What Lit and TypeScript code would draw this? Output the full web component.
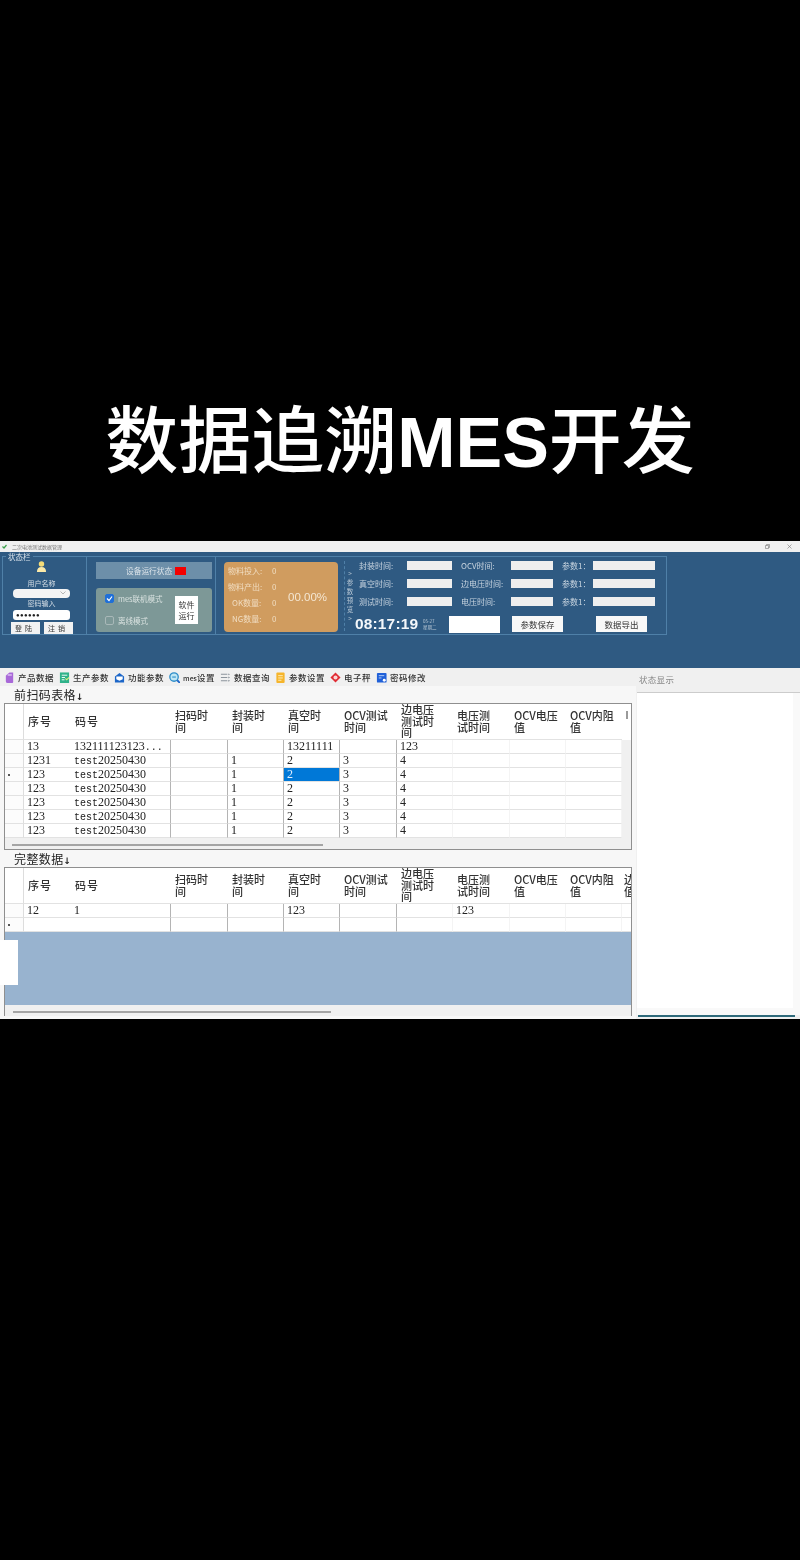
import { LitElement, html, css, svg } from "lit";
import { customElement } from "lit/decorators.js";

const toolIcons = [
  svg`<path d="M3 3 L6 0.5 H10 V11 Q10 12 9 12 H4 Q2 12 2 10 V4 Z" fill="#a868d8"/><path d="M4 2.5 H8.5 V4 H4 Z" fill="#e0c8f4"/>`,
  svg`<rect x="1" y="0.5" width="10" height="11.5" fill="#2fb28a"/><path d="M3 3.5H9M3 6H6.5M3 8.5H6" stroke="#fff" stroke-width="1"/><path d="M7 7l1.3 1.5L11 6" stroke="#d8f080" stroke-width="1.2" fill="none"/>`,
  svg`<path d="M1 5 L6 1 L11 5 V11.5 H1 Z" fill="#1c66c8"/><path d="M2.5 5 H9.5 V8 L6 9.5 L2.5 8 Z" fill="#fff"/>`,
  svg`<circle cx="5.5" cy="5.5" r="4.6" fill="#bfe6f4" stroke="#2c8cc8" stroke-width="1.4"/><path d="M3.5 5.5H7.5" stroke="#2c8cc8" stroke-width="1.2"/><path d="M9 9L12 12" stroke="#1c66c8" stroke-width="2"/>`,
  svg`<path d="M1 2.5H8M1 6H8M1 9.5H8" stroke="#8c949c" stroke-width="1.1"/><path d="M9 1.5l2 1-2 1zM9 5l2 1-2 1zM9 8.5l2 1-2 1z" fill="#8c949c"/>`,
  svg`<rect x="1.5" y="0.5" width="9" height="11.5" rx="1" fill="#f6b52c"/><path d="M3.5 4H8.5M3.5 6.5H8.5M3.5 9H7" stroke="#fff2c4" stroke-width="1"/>`,
  svg`<path d="M6 0.5 L11.5 6 L6 11.5 L0.5 6 Z" fill="#e02c34"/><circle cx="6" cy="6" r="2.2" fill="#fbd4d4"/>`,
  svg`<rect x="1" y="1" width="10.5" height="10.5" rx="1" fill="#2060d8"/><path d="M3 4H9M3 6.5H6" stroke="#bcd4fa" stroke-width="1"/><circle cx="9" cy="9" r="1.6" fill="#fff"/>`,
];
const tools = ["产品数据", "生产参数", "功能参数", "mes设置", "数据查询", "参数设置", "电子秤", "密码修改"];
const heads = ["", "序号", "码号", "扫码时\n间", "封装时\n间", "真空时\n间", "OCV测试\n时间", "边电压\n测试时\n间", "电压测\n试时间", "OCV电压\n值", "OCV内阻\n值"];
const colClass = ["rh", "plain", "line", "line", "line", "line", "line", "faint", "faint", "faint", "faint"];

/** Digits keep their natural half-em width; other characters use a mono face at the same pitch. */
const cell = (t: string) =>
  (t.match(/\d+|\D+/g) ?? []).map((p) => (/\d/.test(p) ? p : html`<span class="w">${p}</span>`));

@customElement("app-table")
class AppTable extends LitElement {
  static properties = { kind: { type: String, reflect: true } };
  kind = "a";
  static styles = css`
    :host { display: block; margin-left: 4px; width: 628px; border: 1px solid #8f8f8f; box-sizing: border-box; background: #f2f2f2; overflow: hidden;
      font-family: "Liberation Serif", "Noto Sans CJK SC", serif; color: #222; }
    :host([kind="b"]) { border-bottom: 0; background: #98b3cf; }
    .grid { display: grid; grid-template-columns: 19px 47px 100px 57px 56px 56px 57px 56px 57px 56px 56px 9px; }
    .h { height: 36px; background: #fff; border-bottom: 1px solid #e2e2e2; box-sizing: border-box; display: flex; align-items: center; padding: 0 0 0 4px;
      font: 500 11px/11.5px "Noto Sans CJK SC", sans-serif; color: #333; overflow: hidden; white-space: pre; }
    .h span { display: block; }
    .h.rh { border-right: 1px solid #ddd; }
    .h.big { letter-spacing: 1px; }
    .c { height: 14px; box-sizing: border-box; background: #fff; border-bottom: 1px solid #e2e2e2; font-size: 12px; line-height: 13px; padding-left: 3px; white-space: nowrap; overflow: hidden; position: relative; }
    .c .w { font: 10px/13px "Liberation Mono", monospace; }
    .c.rh { border-right: 1px solid #ddd; background: #fcfcfc; }
    .c.line { border-right: 1px solid #b4b4b4; }
    .c.faint { border-right: 1px solid #f4f4f4; }
    .c.sel { background: #0078d7; color: #dfeeff; }
    .mark::after { content: ""; position: absolute; left: 3px; top: 6px; width: 2px; height: 2px; background: #555; }
    .sb { height: 11px; background: #f0f0f0; position: relative; }
    .thumb { position: absolute; top: 6px; height: 2px; background: #a4a4a4; }
    .vthumb { background: #fff; display: flex; justify-content: center; padding-top: 7px; height: 36px; box-sizing: border-box; }
    .vthumb i { display: block; width: 2px; height: 8px; background: #9a9a9a; }
    .gray { background: #f0f0f0; height: 14px; }
    .rest { height: 73px; background: #98b3cf; }
    .clip { padding-left: 2px; }
  `;
  private rows() {
    if (this.kind === "b") {
      return [
        ["", "12", "1", "", "", "123", "", "", "123", "", ""],
        ["", "", "", "", "", "", "", "", "", "", ""],
      ];
    }
    const r = (n: string) => ["", n, "test20250430", "", "1", "2", "3", "4", "", "", ""];
    return [
      ["", "13", "132111123123...", "", "", "13211111", "", "123", "", "", ""],
      r("1231"), r("123"), r("123"), r("123"), r("123"), r("123"),
    ];
  }
  render() {
    const b = this.kind === "b";
    const markRow = b ? 1 : 2;
    return html`<div class="grid">
        ${heads.map((t, i) => html`<div class="h ${colClass[i]} ${i === 1 || i === 2 ? "big" : ""}"><span>${t}</span></div>`)}
        ${b ? html`<div class="h clip"><span>${"边\n值"}</span></div>` : html`<div class="vthumb"><i></i></div>`}
        ${this.rows().map((row, ri) =>
          html`${heads.map((_, ci) => {
            const sel = !b && ri === 2 && ci === 5;
            return html`<div class="c ${colClass[ci]} ${sel ? "sel" : ""} ${ci === 0 && ri === markRow ? "mark" : ""}">${cell(row[ci])}</div>`;
          })}${b ? html`<div class="c"></div>` : html`<div class="gray"></div>`}`
        )}
      </div>
      ${b ? html`<div class="rest"></div>` : ""}
      <div class="sb"><div class="thumb" style="width:${b ? 318 : 311}px;left:${b ? 8 : 7}px"></div></div>`;
  }
}

@customElement("app-root")
export class AppRoot extends LitElement {
  static styles = css`
    :host { display: block; width: 800px; height: 1560px; background: #000; overflow: hidden; font-family: "Noto Sans CJK SC", sans-serif; }
    .headline { height: 541px; box-sizing: border-box; padding-top: 386px; text-align: center; color: #fff; font: 500 73px/98px "Noto Sans CJK SC", sans-serif; white-space: nowrap; }
    .headline b { font: 700 70px/98px "Liberation Sans", sans-serif; }
    .win { height: 478px; background: #f5f5f5; position: relative; overflow: hidden; filter: blur(.35px); }
    .title { height: 11px; background: #f0f0f0; display: flex; align-items: center; padding: 0 6px 0 2px; font-size: 5px; color: #777; gap: 5px; }
    .title .name { flex: 1; }
    .title svg { display: block; }
    .title .ctl { display: flex; gap: 17px; margin-right: 2px; }
    .top { height: 116px; background: #2f5a82; color: #c9d5e0; font-size: 8px; padding: 4px 0 0 2px; box-sizing: border-box; }
    .group { width: 665px; height: 79px; box-sizing: border-box; border: 1px solid #4f80a8; display: flex; position: relative; }
    .legend { position: absolute; left: 3px; top: -5px; background: #2f5a82; padding: 0 2px; font-size: 7.5px; line-height: 9px; color: #d8e2ea; }
    .user { width: 84px; border-right: 1px solid #4f80a8; display: flex; flex-direction: column; align-items: center; box-sizing: border-box; padding: 4px 6px 0 0; flex: none; }
    .user svg { display: block; }
    .lab { font-size: 7px; line-height: 9px; color: #d6dfe7; }
    .user .l1 { margin-top: 7px; }
    .user .l2 { margin-top: 1px; }
    .combo { width: 57px; height: 10px; border-radius: 4px; background: #f4f4f4; margin-top: 1px; display: flex; justify-content: flex-end; align-items: center; padding-right: 4px; box-sizing: border-box; }
    .pass { width: 57px; height: 10px; border-radius: 3px; background: #fff; margin-top: 2px; color: #222; font: 6px/10px "Liberation Sans", sans-serif; letter-spacing: .4px; padding-left: 3px; box-sizing: border-box; }
    .btns { display: flex; gap: 4px; margin-top: 2px; }
    .btns div { background: #f2f2f2; color: #333; font: 7px/12px "Noto Sans CJK SC", sans-serif; letter-spacing: 3px; height: 12px; width: 29px; text-align: center; }
    .mid { width: 129px; flex: none; border-right: 1px solid #4f80a8; box-sizing: border-box; padding: 5px 0 0 9px; }
    .status { width: 116px; height: 17px; background: #6d8fa9; display: flex; align-items: center; gap: 3px; font-size: 7.7px; color: #dbe3e9; padding-left: 30px; box-sizing: border-box; }
    .status i { width: 11px; height: 8px; background: #f40000; display: block; }
    .mode { width: 116px; height: 44px; margin-top: 9px; background: #7d9897; border-radius: 3px; display: flex; align-items: center; justify-content: space-between; padding: 0 14px 0 9px; box-sizing: border-box; }
    .checks { display: flex; flex-direction: column; gap: 11px; font-size: 7.5px; color: #d9e2e0; margin-top: -2px; }
    .chk { display: flex; align-items: center; gap: 4px; height: 11px; }
    .box { width: 9px; height: 9px; border-radius: 2px; box-sizing: border-box; border: 1px solid #a8b8b8; display: flex; align-items: center; justify-content: center; }
    .box.on { background: #1f6fd8; border-color: #1f6fd8; }
    .run { width: 23px; height: 28px; background: #fff; color: #333; font-size: 8px; line-height: 11px; text-align: center; display: flex; align-items: center; justify-content: center; }
    .orange { width: 114px; height: 70px; flex: none; background: #d09c5f; border-radius: 4px; margin: 5px 0 0 8px; display: flex; align-items: center; color: #f0dcc0; padding-left: 4px; box-sizing: border-box; }
    .counts { display: grid; grid-template-columns: 44px 8px; row-gap: 7px; font-size: 8px; line-height: 9px; width: 60px; flex: none; margin-top: -6px; }
    .counts .in { padding-left: 4px; }
    .pct { font: 11.5px/16px "Liberation Sans", sans-serif; color: #f4e6d2; }
    .vert { width: 10px; flex: none; margin: 4px 0 3px 6px; border-left: 1px dashed #4f80a8; display: flex; align-items: center; justify-content: center; font-size: 6.5px; line-height: 9px; text-align: center; color: #b9c8d5; }
    .params { padding: 4px 0 0 4px; flex: none; }
    .prow { display: grid; grid-template-columns: 48px 45px 9px 50px 42px 9px 31px 62px; height: 18px; align-items: start; font-size: 8px; line-height: 9px; }
    .prow i { display: block; height: 9px; background: #eeeeee; }
    .bottom { display: flex; align-items: center; margin-left: -4px; height: 18px; color: #fff; }
    .clock { font: 700 15.5px/18px "Liberation Sans", sans-serif; letter-spacing: .15px; color: #f4f7fa; width: 68px; }
    .date { font-size: 4.5px; line-height: 6px; color: #b9c8d5; width: 26px; }
    .blank { width: 51px; height: 17px; background: #fff; margin-right: 12px; flex: none; }
    .act { width: 51px; height: 16px; background: #f8f8f8; color: #333; font-size: 8.5px; line-height: 16px; text-align: center; margin-right: 33px; flex: none; }
    .body { display: grid; grid-template-columns: 636px 164px; height: 351px; }
    .tools { height: 18px; background: #f0f0f0; display: flex; align-items: center; padding-left: 4px; gap: 5px; font: 500 8.5px/12px "Noto Sans CJK SC", sans-serif; color: #333; white-space: nowrap; }
    .tool { display: flex; align-items: center; gap: 3px; letter-spacing: .5px; }
    .tool svg { display: block; flex: none; }
    .tool small { font-size: 7px; letter-spacing: 0; }
    .main { background: #f7f7f7; overflow: hidden; }
    .cap { font: 12px/17px "Noto Sans CJK SC", sans-serif; color: #222; padding-left: 14px; height: 17px; letter-spacing: .4px; }
    .cap span { font: 700 9px/17px "DejaVu Sans", sans-serif; margin-left: 0; letter-spacing: 0; }
    .side { background: #f0f0f0; position: relative; padding-left: 1px; }
    .side .st { height: 24px; font-size: 8.5px; line-height: 22px; color: #888; padding-left: 2px; letter-spacing: .3px; }
    .side .panel { height: 323px; background: #fff; width: 163px; border-top: 1px solid #ccc; box-sizing: border-box; position: relative; }
    .vs { position: absolute; right: 0; top: 0; bottom: 7px; width: 7px; background: #f9f9f9; }
    .hs { position: absolute; left: 0; right: 0; bottom: 0; height: 7px; background: #f9f9f9; }
    .side .foot { height: 2px; background: #2f6a7a; margin-left: 1px; width: 157px; }
    .tab { position: absolute; left: 0; top: 399px; width: 18px; height: 45px; background: #fff; }
  `;
  render() {
    const prow = (a: string, b: string) => html`<div class="prow">
      <span>${a}</span><i></i><span></span><span>${b}</span><i></i><span></span><span>参数1：</span><i></i>
    </div>`;
    return html`
      <div class="headline">数据追溯<b>MES</b>开发</div>
      <div class="win">
        <div class="title">
          <svg width="5" height="5" viewBox="0 0 5 5"><path d="M0.5 2.5L2 4L4.5 1" stroke="#3aa04a" stroke-width="1.2" fill="none" /></svg>
          <span class="name">二次电池测试数据管理</span>
          <span class="ctl">
            <svg width="5" height="5" viewBox="0 0 5 5"><path d="M.5 1.5h3v3h-3zM1.5 1.5v-1h3v3h-1" stroke="#777" stroke-width=".6" fill="none" /></svg>
            <svg width="5" height="5" viewBox="0 0 5 5"><path d="M.5.5l4 4M4.5.5l-4 4" stroke="#777" stroke-width=".6" /></svg>
          </span>
        </div>
        <div class="top">
          <div class="group">
            <div class="legend">状态栏</div>
            <div class="user">
              <svg width="11" height="12" viewBox="0 0 11 12"><circle cx="5.5" cy="3.2" r="3" fill="#f4dc78" /><path d="M.5 12 Q.5 6.5 5.5 6.5 Q10.5 6.5 10.5 12 Z" fill="#fbe9a8" /></svg>
              <div class="lab l1">用户名称</div>
              <div class="combo"><svg width="6" height="4" viewBox="0 0 6 4"><path d="M.5.5L3 3L5.5.5" stroke="#999" stroke-width=".7" fill="none" /></svg></div>
              <div class="lab l2">密码输入</div>
              <div class="pass">●●●●●●</div>
              <div class="btns"><div>登陆</div><div>注销</div></div>
            </div>
            <div class="mid">
              <div class="status"><span>设备运行状态</span><i></i></div>
              <div class="mode">
                <div class="checks">
                  <div class="chk"><span class="box on"><svg width="7" height="7" viewBox="0 0 7 7"><path d="M1 3.5L3 5.5L6 1.5" stroke="#fff" stroke-width="1.2" fill="none" /></svg></span>mes联机模式</div>
                  <div class="chk"><span class="box"></span>离线模式</div>
                </div>
                <div class="run">软件<br />运行</div>
              </div>
            </div>
            <div class="orange">
              <div class="counts">
                <span>物料投入:</span><span>0</span>
                <span>物料产出:</span><span>0</span>
                <span class="in">OK数量:</span><span>0</span>
                <span class="in">NG数量:</span><span>0</span>
              </div>
              <div class="pct">00.00%</div>
            </div>
            <div class="vert">&gt;<br />参<br />数<br />预<br />览<br />&gt;</div>
            <div class="params">
              ${prow("封装时间:", "OCV时间:")}
              ${prow("真空时间:", "边电压时间:")}
              ${prow("测试时间:", "电压时间:")}
              <div class="bottom">
                <div class="clock">08:17:19</div>
                <div class="date">05-27<br />星期二</div>
                <div class="blank"></div>
                <div class="act">参数保存</div>
                <div class="act">数据导出</div>
              </div>
            </div>
          </div>
        </div>
        <div class="body">
          <div class="main">
            <div class="tools">
              ${tools.map((t, i) => html`<div class="tool"><svg width="11" height="11" viewBox="0 0 12 12">${toolIcons[i]}</svg><span>${t.startsWith("mes") ? html`<small>mes</small>${t.slice(3)}` : t}</span></div>`)}
            </div>
            <div class="cap">前扫码表格<span>↓</span></div>
            <app-table kind="a"></app-table>
            <div class="cap">完整数据<span>↓</span></div>
            <app-table kind="b"></app-table>
          </div>
          <div class="side">
            <div class="st">状态显示</div>
            <div class="panel"><div class="vs"></div><div class="hs"></div></div>
            <div class="foot"></div>
          </div>
        </div>
        <div class="tab"></div>
      </div>
    `;
  }
}
void AppTable;
